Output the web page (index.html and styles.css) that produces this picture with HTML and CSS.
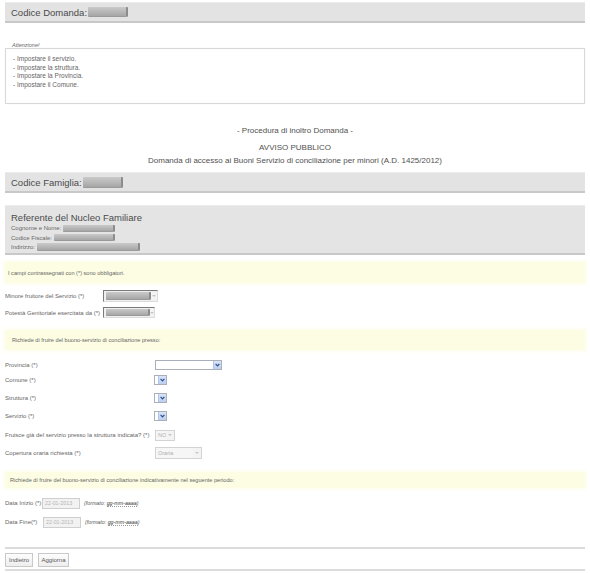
FILE: index.html
```html
<!DOCTYPE html>
<html lang="it">
<head>
<meta charset="utf-8">
<title>Procedura di inoltro Domanda</title>
<link rel="stylesheet" href="styles.css">
</head>
<body>
<div class="page">
  <div class="bar bar-top"><span>Codice Domanda:</span><span class="redact r-code"></span></div>

  <div class="attn">
    <div class="attn-legend">Attenzione!</div>
    <div class="attn-box">
      <div>- Impostare il servizio.</div>
      <div>- Impostare la struttura.</div>
      <div>- Impostare la Provincia.</div>
      <div>- Impostare il Comune.</div>
    </div>
  </div>

  <div class="intro">
    <div class="intro-line l1">- Procedura di inoltro Domanda -</div>
    <div class="intro-line l2">AVVISO PUBBLICO</div>
    <div class="intro-line">Domanda di accesso ai Buoni Servizio di conciliazione per minori (A.D. 1425/2012)</div>
  </div>

  <div class="bar bar-fam"><span>Codice Famiglia:</span><span class="redact r-fam"></span></div>

  <div class="ref">
    <div class="ref-title">Referente del Nucleo Familiare</div>
    <div class="ref-line">Cognome e Nome: <span class="redact r-name"></span></div>
    <div class="ref-line">Codice Fiscale: <span class="redact r-cf"></span></div>
    <div class="ref-line">Indirizzo: <span class="redact r-addr"></span></div>
  </div>

  <div class="note n1">I campi contrassegnati con (*) sono obbligatori.</div>

  <div class="row r-minore">
    <span class="lbl lbl-short">Minore fruitore del Servizio (*)</span>
    <span class="sel sel-dis s-minore"><span class="redact r-sel"></span><span class="arrow-dis"></span></span>
  </div>
  <div class="row r-potesta">
    <span class="lbl lbl-short">Potestà Genitoriale esercitata da (*)</span>
    <span class="sel sel-dis s-potesta"><span class="redact r-sel2"></span><span class="arrow-dis"></span></span>
  </div>

  <div class="note n2">Richiede di fruire del buono-servizio di conciliazione presso:</div>

  <div class="row r-prov">
    <span class="lbl lbl-wide">Provincia (*)</span>
    <span class="sel s-prov"><span class="val"></span><span class="arrow"><svg width="5" height="4" viewBox="0 0 5 4"><path d="M0.6 0.8 L2.5 2.9 L4.4 0.8" stroke="#2c4d8c" stroke-width="1.2" fill="none"/></svg></span></span>
  </div>
  <div class="row r-comune">
    <span class="lbl lbl-wide">Comune (*)</span>
    <span class="sel s-small"><span class="val"></span><span class="arrow"><svg width="5" height="4" viewBox="0 0 5 4"><path d="M0.6 0.8 L2.5 2.9 L4.4 0.8" stroke="#2c4d8c" stroke-width="1.2" fill="none"/></svg></span></span>
  </div>
  <div class="row r-next">
    <span class="lbl lbl-wide">Struttura (*)</span>
    <span class="sel s-small"><span class="val"></span><span class="arrow"><svg width="5" height="4" viewBox="0 0 5 4"><path d="M0.6 0.8 L2.5 2.9 L4.4 0.8" stroke="#2c4d8c" stroke-width="1.2" fill="none"/></svg></span></span>
  </div>
  <div class="row r-next">
    <span class="lbl lbl-wide">Servizio (*)</span>
    <span class="sel s-small"><span class="val"></span><span class="arrow"><svg width="5" height="4" viewBox="0 0 5 4"><path d="M0.6 0.8 L2.5 2.9 L4.4 0.8" stroke="#2c4d8c" stroke-width="1.2" fill="none"/></svg></span></span>
  </div>
  <div class="row r-fruisce">
    <span class="lbl lbl-wide">Fruisce già del servizio presso la struttura indicata? (*)</span>
    <span class="sel sel-light s-no"><span class="val-dis">NO</span><span class="arrow-light"></span></span>
  </div>
  <div class="row r-next">
    <span class="lbl lbl-wide">Copertura oraria richiesta (*)</span>
    <span class="sel sel-light s-oraria"><span class="val-dis">Oraria</span><span class="arrow-light"></span></span>
  </div>

  <div class="note n3">Richiede di fruire del buono-servizio di conciliazione indicativamente nel seguente periodo:</div>

  <div class="row r-data1">
    <span class="lbl lbl-data">Data Inizio (*)</span>
    <span class="date">22-01-2013</span>
    <span class="fmt">(formato: <span class="fmt-val">gg-mm-aaaa</span>)</span>
  </div>
  <div class="row r-data2">
    <span class="lbl lbl-data">Data Fine(*)</span>
    <span class="date">22-01-2013</span>
    <span class="fmt">(formato: <span class="fmt-val">gg-mm-aaaa</span>)</span>
  </div>

  <div class="actions">
    <button class="btn b-back" type="button">Indietro</button>
    <button class="btn b-upd" type="button">Aggiorna</button>
  </div>
</div>
</body>
</html>
```

FILE: styles.css
```css
* { box-sizing: border-box; }
html, body { margin: 0; padding: 0; background: #fff; }
body { font-family: "Liberation Sans", Arial, sans-serif; color: #666; }

.page { width: 590px; padding: 2px 5px 0; }

.bar {
  height: 21px;
  background: #e3e3e3;
  border-top: 1px solid #ececec;
  border-bottom: 2px solid #c8c8c8;
  display: flex;
  align-items: center;
  padding-left: 6px;
  color: #4a4a4a;
  font-size: 9.5px;
  white-space: nowrap;
}

.redact {
  display: inline-block;
  background: linear-gradient(#cacaca, #a6a6a6);
  border-right: 2px solid #8c8c8c;
  border-bottom: 1px solid #9a9a9a;
  border-radius: 1px;
  vertical-align: middle;
}
.r-code { width: 40px; height: 10px; margin-left: 1px; }
.r-fam { width: 40px; height: 11px; margin-left: 1px; }

.attn { margin-top: 19px; }
.attn-legend {
  font-size: 5.5px;
  font-style: italic;
  line-height: 6px;
  height: 6px;
  padding-left: 7px;
  color: #666;
}
.attn-box {
  height: 56px;
  border: 1px solid #d8d8d8;
  box-shadow: 0 0 1px #eee;
  padding: 6px 0 0 7px;
  font-size: 6.5px;
  line-height: 8.5px;
  color: #666;
}

.intro { margin-top: 20px; text-align: center; color: #505050; font-size: 8px; }
.intro-line { line-height: 13px; height: 13px; }
.intro-line.l2 { margin-top: 4px; }

.bar-fam { margin-top: 5px; }

.ref {
  margin-top: 12px;
  height: 50px;
  background: #e4e4e4;
  border-top: 1px solid #ececec;
  border-bottom: 2px solid #c8c8c8;
  padding: 5px 0 0 6px;
}
.ref-title { font-size: 9.5px; line-height: 13px; color: #4a4a4a; }
.ref-line { font-size: 6px; line-height: 9.5px; height: 9.5px; color: #666; white-space: nowrap; }
.r-name { width: 52px; height: 7px; }
.r-cf { width: 61px; height: 7px; }
.r-addr { width: 103px; height: 8px; }

.note {
  background: #fdfde3;
  box-shadow: 0 0 3px 2px #fefef1;
  display: flex;
  align-items: center;
  font-size: 5.6px;
  color: #666;
  white-space: nowrap;
}
.n1 { margin-top: 7px; height: 21px; padding-left: 3px; }
.n2 { margin-top: 12px; height: 20px; padding-left: 7px; }
.n3 { margin-top: 13px; height: 16px; padding-left: 5px; }

.row {
  display: flex;
  align-items: center;
  height: 12px;
  font-size: 6px;
  color: #666;
  white-space: nowrap;
}
.lbl { flex: none; }
.lbl-short { width: 98px; }
.lbl-wide { width: 150px; }
.lbl-data { width: 37px; }

.r-minore { margin-top: 7px; }
.r-potesta { margin-top: 5px; height: 11px; }
.r-prov { margin-top: 9px; }
.r-comune { margin-top: 3px; }
.r-next { margin-top: 6px; }
.r-fruisce { margin-top: 7px; }
.r-data1 { margin-top: 9px; }
.r-data2 { margin-top: 7px; }

.sel {
  display: flex;
  align-items: stretch;
  height: 10px;
  border: 1px solid #a9b0b9;
  background: #fff;
}
.sel .val { flex: 1; }
.arrow {
  width: 8px;
  flex: none;
  background: linear-gradient(#d9e4f8, #bccff1);
  border-left: 1px solid #b3c5e6;
  display: flex;
  align-items: center;
  justify-content: center;
}
.s-prov { width: 67px; }
.s-small { width: 13px; margin-left: -1px; }

.sel-dis {
  height: 12px;
  border-color: #7a7a7a #dcdcdc #dcdcdc #7a7a7a;
  background: #efefef;
  padding: 1px 0 1px 2px;
  align-items: center;
}
.s-minore { width: 55px; }
.s-potesta { width: 52px; height: 11px; }
.r-sel { width: 45px; height: 8px; }
.r-sel2 { width: 44px; height: 7px; }
.arrow-dis {
  flex: 1;
  align-self: stretch;
  background: #f4f4f4;
  position: relative;
}
.arrow-dis::after, .arrow-light::after {
  content: "";
  position: absolute;
  left: 50%;
  top: 50%;
  width: 0;
  height: 0;
  margin: -1px 0 0 -2px;
  border-left: 2px solid transparent;
  border-right: 2px solid transparent;
  border-top: 2px solid #c6c6c6;
}

.sel-light {
  height: 11px;
  border: 1px solid #d3d3d3;
  background: #f6f6f6;
  align-items: center;
}
.val-dis { flex: 1; font-size: 5.5px; color: #b0b0b0; padding-left: 2px; }
.arrow-light { width: 8px; align-self: stretch; position: relative; background: #f3f3f3; }
.s-no { width: 20px; }
.s-oraria { width: 47px; height: 12px; }

.date {
  width: 38px;
  height: 11px;
  border: 1px solid #cfcfcf;
  background: #f2f2f2;
  font-size: 5.3px;
  color: #b5b5b5;
  display: flex;
  align-items: center;
  padding-left: 2px;
}
.r-data2 .date { margin-left: 1px; }
.fmt { margin-left: 4px; font-size: 5.3px; font-style: italic; color: #555; }
.fmt-val { color: #333; border-bottom: 1px dotted #999; }

.actions {
  margin-top: 19px;
  border-top: 2px solid #dcdcdc;
  border-bottom: 2px solid #dcdcdc;
  padding: 4px 0 2px;
  display: flex;
  gap: 5px;
}
.btn {
  height: 14px;
  margin: 0;
  padding: 0;
  border: 1px solid #c9c9c9;
  background: linear-gradient(#fdfdfd, #eeeeee);
  font-family: "Liberation Sans", Arial, sans-serif;
  font-size: 6px;
  color: #555;
}
.b-back { width: 28px; }
.b-upd { width: 31px; }
```
